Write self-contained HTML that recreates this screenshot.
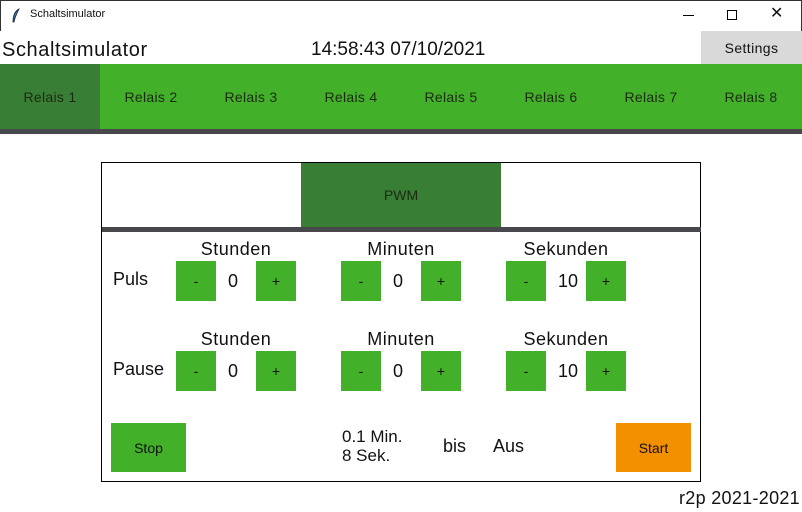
<!DOCTYPE html>
<html><head><meta charset="utf-8"><style>
*{margin:0;padding:0;box-sizing:border-box}
body{width:802px;height:512px;position:relative;background:#fff;font-family:"Liberation Sans",sans-serif;overflow:hidden;color:#111}
.a{position:absolute}
.c{display:flex;align-items:center;justify-content:center}
.g{background:#43b02a}
.btn{position:absolute;width:40px;height:40px;background:#43b02a;display:flex;align-items:center;justify-content:center;font-size:14px}
.lbl{position:absolute;font-size:18px;text-align:center;width:140px;letter-spacing:0.5px}
.num{position:absolute;font-size:18px;width:40px;text-align:center}
.tab{position:absolute;top:64px;height:65px;width:100px;display:flex;align-items:center;justify-content:center;font-size:14px;color:#1c2a14;letter-spacing:0.3px}
</style></head><body>
<div class="a" style="left:0;top:0;width:802px;height:31px;border:1px solid #333;border-bottom:none"></div>
<svg class="a" style="left:11px;top:8px" width="10" height="16" viewBox="0 0 10 16"><path d="M8 1 C4 3 2 8 2 14 L3 14 C4 9 6 5 8 1Z" fill="#3a6fb0" stroke="#123" stroke-width="0.8"/></svg>
<div class="a" style="left:30px;top:8px;font-size:11px">Schaltsimulator</div>
<div class="a" style="left:683px;top:15px;width:11px;height:1px;background:#000"></div>
<div class="a" style="left:727px;top:10px;width:10px;height:10px;border:1px solid #000"></div>
<div class="a" style="left:770px;top:4px;font-size:16px;line-height:20px">✕</div>
<div class="a" style="left:2px;top:39px;font-size:20px;letter-spacing:0.6px">Schaltsimulator</div>
<div class="a" style="left:311px;top:39px;font-size:19px">14:58:43 07/10/2021</div>
<div class="a c" style="left:701px;top:31px;width:101px;height:33px;background:#d9d9d9;font-size:14px;letter-spacing:0.4px">Settings</div>
<div class="a g" style="left:0;top:64px;width:802px;height:65px"></div>
<div class="tab" style="left:0;background:#387e34">Relais 1</div>
<div class="tab" style="left:101px">Relais 2</div>
<div class="tab" style="left:201px">Relais 3</div>
<div class="tab" style="left:301px">Relais 4</div>
<div class="tab" style="left:401px">Relais 5</div>
<div class="tab" style="left:501px">Relais 6</div>
<div class="tab" style="left:601px">Relais 7</div>
<div class="tab" style="left:701px">Relais 8</div>
<div class="a" style="left:0;top:129px;width:802px;height:5px;background:#48474b"></div>
<div class="a" style="left:101px;top:162px;width:600px;height:320px;border:1px solid #000"></div>
<div class="a c" style="left:301px;top:163px;width:200px;height:64px;background:#387e34;font-size:14px;color:#1c2a14">PWM</div>
<div class="a" style="left:102px;top:227px;width:599px;height:5px;background:#48474b"></div>

<div class="lbl" style="left:166px;top:239px">Stunden</div>
<div class="lbl" style="left:331px;top:239px">Minuten</div>
<div class="lbl" style="left:496px;top:239px">Sekunden</div>
<div class="a" style="left:113px;top:269px;font-size:18px">Puls</div>
<div class="btn" style="left:176px;top:261px">-</div><div class="num" style="left:213px;top:271px">0</div><div class="btn" style="left:256px;top:261px">+</div>
<div class="btn" style="left:341px;top:261px">-</div><div class="num" style="left:378px;top:271px">0</div><div class="btn" style="left:421px;top:261px">+</div>
<div class="btn" style="left:506px;top:261px">-</div><div class="num" style="left:548px;top:271px">10</div><div class="btn" style="left:586px;top:261px">+</div>

<div class="lbl" style="left:166px;top:329px">Stunden</div>
<div class="lbl" style="left:331px;top:329px">Minuten</div>
<div class="lbl" style="left:496px;top:329px">Sekunden</div>
<div class="a" style="left:113px;top:359px;font-size:18px">Pause</div>
<div class="btn" style="left:176px;top:351px">-</div><div class="num" style="left:213px;top:361px">0</div><div class="btn" style="left:256px;top:351px">+</div>
<div class="btn" style="left:341px;top:351px">-</div><div class="num" style="left:378px;top:361px">0</div><div class="btn" style="left:421px;top:351px">+</div>
<div class="btn" style="left:506px;top:351px">-</div><div class="num" style="left:548px;top:361px">10</div><div class="btn" style="left:586px;top:351px">+</div>

<div class="a c g" style="left:111px;top:423px;width:75px;height:49px;font-size:14px">Stop</div>
<div class="a" style="left:342px;top:427px;font-size:17px;line-height:19px">0.1 Min.<br>8 Sek.</div>
<div class="a" style="left:443px;top:436px;font-size:18px">bis</div>
<div class="a" style="left:493px;top:436px;font-size:18px">Aus</div>
<div class="a c" style="left:616px;top:423px;width:75px;height:49px;background:#f39000;font-size:14px">Start</div>
<div class="a" style="right:2px;top:488px;font-size:18px;letter-spacing:0.3px">r2p 2021-2021</div>
</body></html>
